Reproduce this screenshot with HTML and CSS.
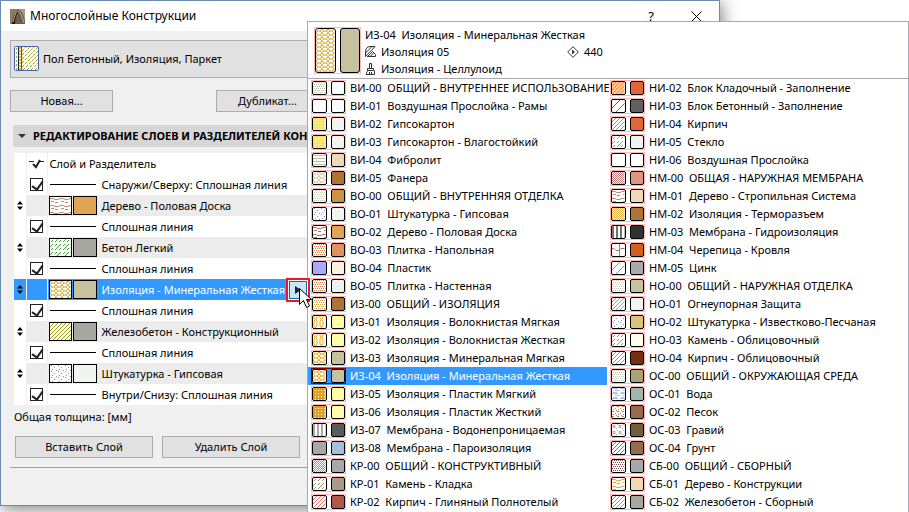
FILE: index.html
```
<!DOCTYPE html>
<html lang="ru">

<head>
  <meta charset="UTF-8">
  <title>Многослойные Конструкции</title>
  <link rel="stylesheet" href="styles.css">
</head>

<body>

  <main class="window">
    <header class="titlebar">
      <svg class="logo" viewBox="0 0 15 15">
        <rect width="15" height="15" fill="#5d5340"/>
        <path d="M0 0h8L2 15H0z" fill="#8a7d5e"/>
        <path d="M9 1c3 1 5 6 6 12V0H9z" fill="#a89c80"/>
        <path d="M2 15C3 8 5 3 7 2l1 1c-2 3-3 7-3 12z" fill="#1c1814"/>
        <path d="M5 15C6 8 7 4 9 3c3 2 4 7 4 12z" fill="#6a5f4a"/>
        <path d="M3 13C5 6 6 2 8 2s4 5 6 12" fill="none" stroke="#c9bd9c"/>
      </svg>
      <h1>Многослойные Конструкции</h1>
      <button class="title-btn" aria-label="Справка">?</button>
      <button class="title-btn" aria-label="Закрыть">
        <svg width="11" height="11" viewBox="0 0 11 11"><path d="M.5.5l10 10M10.5.5l-10 10" stroke="#000"/></svg>
      </button>
    </header>

    <div class="content">
      <button class="composite">
        <svg width="26" height="26" viewBox="0 0 26 26">
          <rect x=".5" y=".5" width="24" height="24" rx="1" fill="#fff" stroke="#4a62ac"/>
          <path d="M2 4l1-2M2 8l1-2M2 12l1-2M2 16l1-2M2 20l1-2M2 24l1-2" stroke="#58a058"/>
          <path d="M4.500 1v23" stroke="#222"/>
          <path d="M6 1v23" stroke="#f0b848" stroke-dasharray="2 1" stroke-width="2"/>
          <path d="M7.500 1v23" stroke="#7a4a14"/>
          <path d="M8 5l4-4M8 9l8-8M8 13L20 1M8 17L24 1M8 21L24 5M9 24L24 9M13 24l11-11M17 24l7-7M21 24l3-3" stroke="#96a020" stroke-dasharray="3 1"/>
        </svg>
        Пол Бетонный, Изоляция, Паркет
      </button>

      <div class="actions">
        <button class="btn">Новая...</button>
        <button class="btn">Дубликат...</button>
      </div>

      <button class="section"><span class="triangle"></span>РЕДАКТИРОВАНИЕ СЛОЕВ И РАЗДЕЛИТЕЛЕЙ КОНСТРУКЦИИ</button>

      <table class="layers">
        <thead>
          <tr>
            <th class="move"></th>
            <th class="check">
              <svg width="15" height="10" viewBox="0 0 15 10"><path d="M0 2.500h5M11 2.500h4" stroke="#222"/><path d="M4 5l3 3 4-7" fill="none" stroke="#222" stroke-width="2"/></svg>
            </th>
            <th class="name">Слой и Разделитель</th>
          </tr>
        </thead>
        <tbody id="layers"></tbody>
      </table>

      <p class="total">Общая толщина: [мм]</p>

      <div class="layer-actions">
        <button class="btn">Вставить Слой</button>
        <button class="btn">Удалить Слой</button>
      </div>
    </div>
  </main>

  <section class="popup">
    <div class="current">
      <span class="swatch large"><i data-kind="foam" data-color="#e0a828"></i><i data-color="#c6c2a0"></i></span>
      <div class="info">
        <div class="info-title">ИЗ-04  Изоляция - Минеральная Жесткая</div>
        <div class="info-row">
          <svg width="11" height="11" viewBox="0 0 11 11" fill="none" stroke="#333"><path d="M10 .5H5C2 .5.5 3 .5 6v4.500L10 .5M.5 7L7 .5M2 10.500h8.500v-2L7.500 5.500l-5 5M5 10.500l3.500-3.500"/></svg>
          <span class="fill-name">Изоляция 05</span>
          <svg width="12" height="12" viewBox="0 0 12 12" fill="none" stroke="#333"><path d="M6 .7L11.300 6 6 11.300.7 6z"/><path d="M5 3.500v5L8 6z" fill="#333" stroke="none"/></svg>
          <span>440</span>
        </div>
        <div class="info-row">
          <svg width="11" height="12" viewBox="0 0 11 12" fill="none" stroke="#333"><path d="M4.500 5V.5h2V5M2.500 5.500h6v2h-6zM2.500 7.500l-1.500 4h8.500v-4M4.500 11V9M6.500 11V9"/></svg>
          <span>Изоляция - Целлулоид</span>
        </div>
      </div>
    </div>
    <div class="materials" id="materials"></div>
  </section>

  <script>
    // tile width, tile height, path and optional stroke width of each hatch
    const HATCHES = {
      dots: [4, 4, 'M0 .5h1M2 .5h1M1 2.500h1M3 2.500h1'],
      grid: [3, 3, 'M0 1h3M1 0v3', 2],
      mesh: [2, 2, 'M0 .5h1M1 1.500h1'],
      sand: [7, 6, 'M1 .5h1M4 2.500h1M2 4.500h1M6 5.500h1'],
      soil: [5, 5, 'M0 .5h2M3 2.500h1M1 3.500h1M4 4.500h1'],
      lines: [4, 3, 'M0 1.500h4'],
      bars: [4, 4, 'M1 0v4', 2],
      diag: [4, 4, 'M-1 5l6-6M-1 1l2-2M3 5l2-2', 2],
      wide: [8, 8, 'M-1 9L9-1M-1 1l2-2M7 9l2-2'],
      pairs: [8, 8, 'M-1 9L9-1M-1 1l2-2M7 9l2-2M0 4l4-4M4 8l4-4'],
      dash: [8, 8, 'M0 8l3-3M5 3l3-3M1 3l2-2M5 7l2-2'],
      wood: [10, 7, 'M0 1.500h3l2 1h3l2-1M1 4.500h3M5 5.500h3'],
      water: [8, 5, 'M0 .5h6M3 2.500h5M1 4.500h4'],
      foam: [6, 4, 'M0 .5h1l1 1.500h2l1-1.500h1M0 3.500l2-1.500M4 2l2 1.500'],
      wave: [6, 8, 'M1 0v2l3 3v3M4 0v2L1 5v3'],
      tile: [12, 12, 'M0 4.500h2l2 2h3l2-2h3M7.500 0v12'],
      gravel: [6, 6, 'M1 1.500h2v2h-2zM4 4.500h1M5 .5h1']
    };

    const layers = [
      { line: 'Снаружи/Сверху: Сплошная линия' },
      { name: 'Дерево - Половая Доска', kind: 'wood', ink: '#c08870', color: '#dfa552' },
      { line: 'Сплошная линия' },
      { name: 'Бетон Легкий', kind: 'dash', ink: '#48a838', color: '#a6a79e' },
      { line: 'Сплошная линия' },
      { name: 'Изоляция - Минеральная Жесткая', kind: 'foam', ink: '#e0a828', color: '#c6c2a0', selected: true },
      { line: 'Сплошная линия' },
      { name: 'Железобетон - Конструкционный', kind: 'pairs', ink: '#a0a010', color: '#a6a79e' },
      { line: 'Сплошная линия' },
      { name: 'Штукатурка - Гипсовая', kind: 'sand', ink: '#8090c8', color: '#f2f5ee' },
      { line: 'Внутри/Снизу: Сплошная линия' }
    ];

    const materials = [
      ['ВИ-00', 'ОБЩИЙ - ВНУТРЕННЕЕ ИСПОЛЬЗОВАНИЕ', 'dots', '#c8c0a0', '#ffffff'],
      ['ВИ-01', 'Воздушная Прослойка - Рамы', '', '', '#ffffff'],
      ['ВИ-02', 'Гипсокартон', 'grid', '#f8e468', '#f2f5ee'],
      ['ВИ-03', 'Гипсокартон - Влагостойкий', 'grid', '#f8e468', '#f2f5ee'],
      ['ВИ-04', 'Фибролит', 'lines', '#c8c0a0', '#eed8b6'],
      ['ВИ-05', 'Фанера', 'foam', '#d0c8a0', '#ad7434'],
      ['ВО-00', 'ОБЩИЙ - ВНУТРЕННЯЯ ОТДЕЛКА', 'dots', '#c8c8b0', '#cd9542'],
      ['ВО-01', 'Штукатурка - Гипсовая', 'sand', '#8090c8', '#f2f5ee'],
      ['ВО-02', 'Дерево - Половая Доска', 'wood', '#b07058', '#dfa552'],
      ['ВО-03', 'Плитка - Напольная', 'dots', '#e07840', '#df935f'],
      ['ВО-04', 'Пластик', 'solid', '#a9a9ff', '#fff2e0'],
      ['ВО-05', 'Плитка - Настенная', 'dots', '#e07840', '#f0f0f0'],
      ['ИЗ-00', 'ОБЩИЙ - ИЗОЛЯЦИЯ', 'dots', '#e0a828', '#ad7434'],
      ['ИЗ-01', 'Изоляция - Волокнистая Мягкая', 'wave', '#e0a828', '#ffffa6'],
      ['ИЗ-02', 'Изоляция - Волокнистая Жесткая', 'wave', '#e0a828', '#ffffa6'],
      ['ИЗ-03', 'Изоляция - Минеральная Мягкая', 'foam', '#e0a828', '#c6c2a0'],
      ['ИЗ-04', 'Изоляция - Минеральная Жесткая', 'foam', '#e0a828', '#c6c2a0'],
      ['ИЗ-05', 'Изоляция - Пластик Мягкий', 'grid', '#e0a020', '#ffffa6'],
      ['ИЗ-06', 'Изоляция - Пластик Жесткий', 'grid', '#e0a020', '#ffffa6'],
      ['ИЗ-07', 'Мембрана - Водонепроницаемая', 'bars', '#a8a8a8', '#5c5c5c'],
      ['ИЗ-08', 'Мембрана - Пароизоляция', 'solid', '#a8a8a8', '#a4bedd'],
      ['КР-00', 'ОБЩИЙ - КОНСТРУКТИВНЫЙ', 'mesh', '#a8a070', '#a8a8a8'],
      ['КР-01', 'Камень - Кладка', 'dash', '#a09060', '#aa9a86'],
      ['КР-02', 'Кирпич - Глиняный Полнотелый', 'pairs', '#f07068', '#b0584a'],
      ['НИ-02', 'Блок Кладочный - Заполнение', 'diag', '#f4a058', '#e06538'],
      ['НИ-03', 'Блок Бетонный - Заполнение', 'wide', '#309030', '#606060'],
      ['НИ-04', 'Кирпич', 'pairs', '#f07068', '#e06538'],
      ['НИ-05', 'Стекло', 'dash', '#50b0f0', '#eef5f2'],
      ['НИ-06', 'Воздушная Прослойка', '', '', '#ffffff'],
      ['НМ-00', 'ОБЩАЯ - НАРУЖНАЯ МЕМБРАНА', 'mesh', '#c08080', '#e0957e'],
      ['НМ-01', 'Дерево - Стропильная Система', 'wood', '#c08870', '#eed8b6'],
      ['НМ-02', 'Изоляция - Терморазъем', 'mesh', '#e0b040', '#ad7434'],
      ['НМ-03', 'Мембрана - Гидроизоляция', 'bars', '#707478', '#303030'],
      ['НМ-04', 'Черепица - Кровля', 'tile', '#b87070', '#d46020'],
      ['НМ-05', 'Цинк', 'wide', '#60a0e0', '#a8aaac'],
      ['НО-00', 'ОБЩИЙ - НАРУЖНАЯ ОТДЕЛКА', 'dots', '#c8c8b0', '#c6c2a0'],
      ['НО-01', 'Огнеупорная Защита', 'pairs', '#e09c10', '#f2f5ee'],
      ['НО-02', 'Штукатурка - Известково-Песчаная', 'sand', '#8090c8', '#dac478'],
      ['НО-03', 'Камень - Облицовочный', 'dash', '#a08870', '#fdffee'],
      ['НО-04', 'Кирпич - Облицовочный', 'pairs', '#f07068', '#743010'],
      ['ОС-00', 'ОБЩИЙ - ОКРУЖАЮЩАЯ СРЕДА', 'dots', '#c8c8b0', '#aaa472'],
      ['ОС-01', 'Вода', 'water', '#a0c8f8', '#a2b4b2'],
      ['ОС-02', 'Песок', 'soil', '#b88840', '#966a4c'],
      ['ОС-03', 'Гравий', 'gravel', '#b0a898', '#70603e'],
      ['ОС-04', 'Грунт', 'pairs', '#b87018', '#966a4c'],
      ['СБ-00', 'ОБЩИЙ - СБОРНЫЙ', 'dots', '#804858', '#a8a8a8'],
      ['СБ-01', 'Дерево - Конструкции', 'wood', '#e0a828', '#eed8b6'],
      ['СБ-02', 'Железобетон - Сборный', 'pairs', '#a0a010', '#a6a79e']
    ];

    function swatch(kind, ink, color) {
      return `<span class="swatch"><i data-kind="${kind}" data-color="${ink}"></i><i data-color="${color}"></i></span>`;
    }

    document.getElementById('layers').innerHTML = layers.map((layer, i) => {
      if (layer.line) {
        return `
          <tr>
            <td class="move"></td>
            <td class="check"><input type="checkbox" id="line${i}" checked></td>
            <td class="name"><label class="cell" for="line${i}"><span class="rule"></span>${layer.line}</label></td>
          </tr>`;
      }
      const flyout = `
        <button class="flyout" aria-label="Выбрать материал"></button>
        <svg class="cursor" width="13" height="21" viewBox="0 0 13 21"><path d="M.5.5v16l4-4 3 7 3-1.500-3-6.500h5z" fill="#fff" stroke="#000"/></svg>`;
      return `
        <tr class="layer ${layer.selected ? 'selected' : ''}">
          <td class="move"><svg width="6" height="9" viewBox="0 0 6 9"><path d="M0 3.500L3 0l3 3.500zM0 5.500L3 9l3-3.500z"/></svg></td>
          <td class="check"></td>
          <td class="name"><div class="cell">${swatch(layer.kind, layer.ink, layer.color)}<span>${layer.name}</span>${layer.selected ? flyout : ''}</div></td>
        </tr>`;
    }).join('');

    document.getElementById('materials').innerHTML = materials.map(([code, name, kind, ink, color]) => `
      <button class="material ${code === 'ИЗ-04' ? 'selected' : ''}">${swatch(kind, ink, color)}${code}  ${name}</button>`
    ).join('');

    document.querySelectorAll('.swatch i').forEach((el, i) => {
      const { kind, color } = el.dataset;
      const hatch = HATCHES[kind];
      if (hatch) {
        const [w, h, path, stroke = 1] = hatch;
        el.innerHTML = `<svg width="100%" height="100%">
          <pattern id="hatch${i}" width="${w}" height="${h}" patternUnits="userSpaceOnUse"><path d="${path}" fill="none" stroke="${color}" stroke-width="${stroke}"/></pattern>
          <rect width="100%" height="100%" fill="url(#hatch${i})"/>
        </svg>`;
      } else if (color) {
        el.style.background = color;
      }
    });
  </script>

</body>

</html>
```
FILE: styles.css
```
* {
  box-sizing: border-box;
}

body {
  margin: 0;
  height: 100vh;
  overflow: hidden;
  position: relative;
  background: #fff;
  color: #000;
  font-family: "Noto Sans", "Open Sans", sans-serif;
  font-size: 11px;
  line-height: 16px;
}

button {
  padding: 0;
  border: none;
  background: none;
  color: inherit;
  font: inherit;
}

.window {
  margin-right: 189px;
  border: 1px solid #6a8cae;
  background: #f0f0f0;
  box-shadow: 2px 3px 16px rgba(0, 0, 0, 0.5);
}

.titlebar {
  display: flex;
  align-items: center;
  height: 30px;
  padding: 0 13px 0 9px;
  background: #fff;
}

.logo {
  width: 15px;
  height: 15px;
  margin-right: 5px;
}

.titlebar h1 {
  flex: 1;
  margin: 0;
  font-size: 12px;
  font-weight: normal;
}

.title-btn {
  width: 20px;
  height: 20px;
  margin-left: 25px;
  font-size: 13px;
}

.title-btn svg {
  display: block;
  margin: auto;
}

.content {
  padding: 9px 9px 37px;
}

.composite {
  display: flex;
  align-items: center;
  gap: 3px;
  width: 100%;
  height: 38px;
  padding: 0 3px;
  border: 1px solid #adadad;
  background: #e1e1e1;
}

.btn {
  height: 22px;
  border: 1px solid #adadad;
  background: #e1e1e1;
}

.actions {
  display: flex;
  gap: 103px;
  margin: 12px 0 13px;
}

.actions .btn {
  width: 103px;
}

.section {
  display: flex;
  align-items: center;
  width: calc(100% - 3px);
  height: 22px;
  margin-left: 3px;
  padding-left: 5px;
  border-radius: 3px;
  background: #d6d6d6;
  font-weight: bold;
}

.triangle {
  margin-right: 7px;
  border: 4px solid transparent;
  border-top-color: #333;
  border-bottom: none;
}

.layers {
  width: calc(100% - 4px);
  margin: 6px 0 0 4px;
  border-collapse: collapse;
  background: #fff;
}

.layers th,
.layers td {
  height: 21px;
  padding: 0;
  font-weight: normal;
  text-align: left;
}

.layers .move {
  width: 12px;
  border-right: 1px solid #f0f0f0;
}

.layers .check {
  width: 21px;
  border-right: 1px solid #f0f0f0;
}

.layers svg,
.layers input {
  display: block;
  margin: auto;
}

.layers .name {
  padding-left: 2px;
}

.layer .check,
.layer .name {
  background: #ececec;
}

.layers .selected td {
  background: #3399ff;
  color: #fff;
}

.layers input {
  appearance: none;
  width: 13px;
  height: 13px;
  border: 1px solid #222;
  background: #fff;
}

.layers input:checked::before {
  content: "";
  display: block;
  width: 5px;
  height: 9px;
  margin: 0 3px;
  border: solid #222;
  border-width: 0 2px 2px 0;
  transform: rotate(35deg);
}

.cell {
  display: flex;
  align-items: center;
  position: relative;
}

.rule {
  width: 46px;
  height: 1px;
  margin-right: 6px;
  background: #000;
}

.swatch {
  display: flex;
  gap: 4px;
  flex: none;
  width: 35px;
  height: 16px;
  margin-right: 4px;
  border: 1px solid #ffb8b8;
}

.swatch i {
  flex: 1;
  overflow: hidden;
  border: 1px solid #000;
  border-radius: 2px;
  background: #fff;
}

.layers .swatch {
  gap: 1px;
  width: 48px;
  height: 19px;
  margin: 0 5px 0 -1px;
  border: none;
}

.layers .swatch i {
  border-radius: 0;
}

.layers .swatch svg,
.swatch svg {
  display: block;
}

.flyout {
  position: absolute;
  left: 239px;
  z-index: 2;
  width: 18px;
  height: 18px;
  border: 1px solid #1468b0;
  background: #cce4f7;
  box-shadow: 0 0 0 1px #fff, 0 0 0 3px #f01820;
}

.flyout::before {
  content: "";
  display: block;
  width: 0;
  margin: auto;
  border: 4px solid transparent;
  border-left: 6px solid #222;
  border-right: none;
}

.layers .cursor {
  position: absolute;
  left: 249px;
  top: 8px;
  z-index: 3;
}

.total {
  margin: 4px 0 11px 4px;
}

.layer-actions {
  display: flex;
  gap: 9px;
  padding: 0 0 9px 5px;
  border-bottom: 1px solid #a0a0a0;
}

.layer-actions .btn {
  width: 138px;
}

.popup {
  position: absolute;
  top: 21px;
  left: 307px;
  right: 0;
  bottom: 0;
  z-index: 1;
  border: 1px solid #a8a8ae;
  border-bottom: none;
  background: #fff;
}

.current {
  display: flex;
  height: 57px;
  padding: 4px 6px;
  border-bottom: 1px solid #a8a8ae;
  line-height: 17px;
}

.info-title {
  white-space: pre;
}

.swatch.large {
  align-self: flex-end;
  width: 47px;
  height: 47px;
}

.large i {
  border-radius: 3px;
}

.info-row {
  display: flex;
  align-items: center;
  gap: 5px;
}

.fill-name {
  width: 181px;
}

.materials {
  display: grid;
  grid-template-rows: repeat(24, 18px);
  grid-template-columns: repeat(2, minmax(0, 1fr));
  grid-auto-flow: column;
  padding-right: 2px;
}

.material {
  display: flex;
  align-items: center;
  padding-left: 3px;
  white-space: pre;
}

.material.selected {
  background: #3399ff;
  color: #fff;
}

.material.selected .swatch {
  border-color: #800000;
}
```
